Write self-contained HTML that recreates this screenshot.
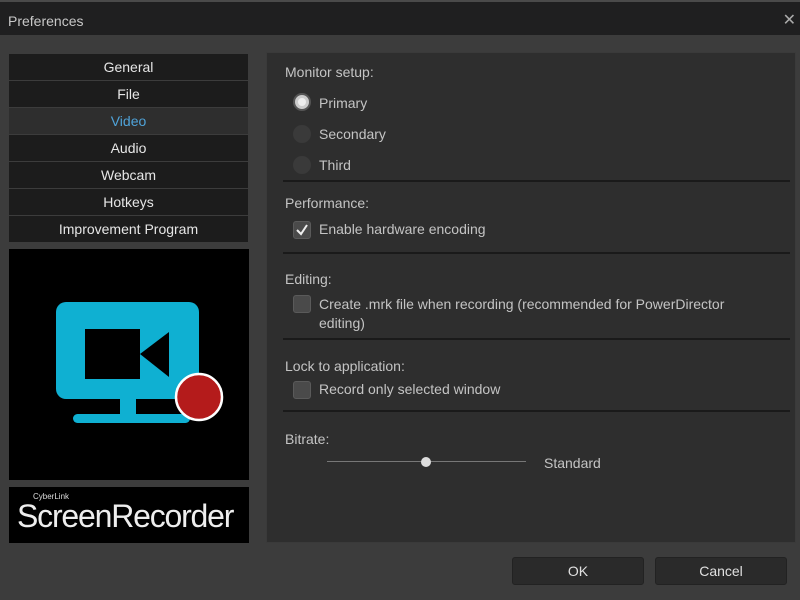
<!DOCTYPE html>
<html><head><style>
*{margin:0;padding:0;box-sizing:border-box}
body{width:800px;height:600px;background:#3c3c3c;font-family:"Liberation Sans",sans-serif;color:#c8c8c8;position:relative;overflow:hidden;font-size:14px}
.abs{position:absolute}
#title{left:0;top:0;width:800px;height:35px;background:#1f1f20;border-top:2px solid #4a4a4a}
#title span{position:absolute;left:8px;top:11px;font-size:14px;color:#c8c8c8}
#close{right:4px;top:10px;font-size:16px;color:#aaa}
.nav{left:9px;width:239px;height:26px;background:#1c1c1c;text-align:center;line-height:26px;font-size:14px;color:#e6e6e6}
.nav.sel{background:#2e2e2e;color:#4fa3d9}
#logo{left:9px;top:249px;width:240px;height:231px;background:#000}
#brand{left:9px;top:487px;width:240px;height:56px;background:#000}
#panel{left:266px;top:52px;width:530px;height:491px;background:#2e2e2e;border:1px solid #3a3a3a}
.lbl{font-size:14px;color:#c4c4c4}
.sep{left:283px;width:507px;height:2px;background:#1a1a1a}
.radio{width:18px;height:18px;border-radius:50%;background:#3a3a3a}
.cb{width:18px;height:18px;border-radius:3px;background:#4a4a4a;border:1px solid #5a5a5a}
.btn{top:557px;width:132px;height:28px;background:#2a2a2a;border:1px solid #222;border-radius:3px;text-align:center;line-height:27px;color:#e0e0e0;font-size:14px}
</style></head><body>
<div id="title" class="abs"><span>Preferences</span></div>
<div id="close" class="abs">✕</div>

<div class="abs nav" style="top:54px">General</div>
<div class="abs nav" style="top:81px">File</div>
<div class="abs nav sel" style="top:108px">Video</div>
<div class="abs nav" style="top:135px">Audio</div>
<div class="abs nav" style="top:162px">Webcam</div>
<div class="abs nav" style="top:189px">Hotkeys</div>
<div class="abs nav" style="top:216px">Improvement Program</div>

<div id="logo" class="abs">
<svg width="240" height="231" viewBox="0 0 240 231">
<rect x="47" y="53" width="143" height="97" rx="10" fill="#0fb0d2"/>
<rect x="76" y="80" width="55" height="50" fill="#000"/>
<polygon points="131,105 160,83 160,128" fill="#000"/>
<rect x="111" y="150" width="16" height="22" fill="#0fb0d2"/>
<rect x="64" y="165" width="117" height="9" rx="4.5" fill="#0fb0d2"/>
<circle cx="190" cy="148" r="23" fill="#b41b1b" stroke="#fff" stroke-width="2.5"/>
</svg>
</div>
<div id="brand" class="abs">
<div class="abs" style="left:24px;top:5px;font-size:8px;color:#ddd">CyberLink</div>
<div class="abs" style="left:8px;top:11px;font-size:32px;color:#eee;letter-spacing:-1.2px;font-weight:300">ScreenRecorder</div>
</div>

<div id="panel" class="abs"></div>
<div class="abs lbl" style="left:285px;top:64px">Monitor setup:</div>
<div class="abs radio" style="left:293px;top:93px;background:#ccc;border:2px solid #555"><div style="width:8px;height:8px;border-radius:50%;background:#eee;margin:3px"></div></div>
<div class="abs lbl" style="left:319px;top:95px">Primary</div>
<div class="abs radio" style="left:293px;top:125px"></div>
<div class="abs lbl" style="left:319px;top:126px">Secondary</div>
<div class="abs radio" style="left:293px;top:156px"></div>
<div class="abs lbl" style="left:319px;top:157px">Third</div>
<div class="abs sep" style="top:180px"></div>

<div class="abs lbl" style="left:285px;top:195px">Performance:</div>
<div class="abs cb" style="left:293px;top:221px"><svg width="16" height="16"><path d="M3 8 L7 12 L13 3" stroke="#eee" stroke-width="2" fill="none"/></svg></div>
<div class="abs lbl" style="left:319px;top:221px">Enable hardware encoding</div>
<div class="abs sep" style="top:252px"></div>

<div class="abs lbl" style="left:285px;top:271px">Editing:</div>
<div class="abs cb" style="left:293px;top:295px"></div>
<div class="abs lbl" style="left:319px;top:295px;width:440px;line-height:19px">Create .mrk file when recording (recommended for PowerDirector editing)</div>
<div class="abs sep" style="top:338px"></div>

<div class="abs lbl" style="left:285px;top:358px">Lock to application:</div>
<div class="abs cb" style="left:293px;top:381px"></div>
<div class="abs lbl" style="left:319px;top:381px">Record only selected window</div>
<div class="abs sep" style="top:410px"></div>

<div class="abs lbl" style="left:285px;top:431px">Bitrate:</div>
<div class="abs" style="left:327px;top:461px;width:199px;height:1px;background:#777"></div>
<div class="abs" style="left:421px;top:457px;width:10px;height:10px;border-radius:50%;background:#ddd"></div>
<div class="abs lbl" style="left:544px;top:455px">Standard</div>

<div class="abs btn" style="left:512px">OK</div>
<div class="abs btn" style="left:655px">Cancel</div>
</body></html>
